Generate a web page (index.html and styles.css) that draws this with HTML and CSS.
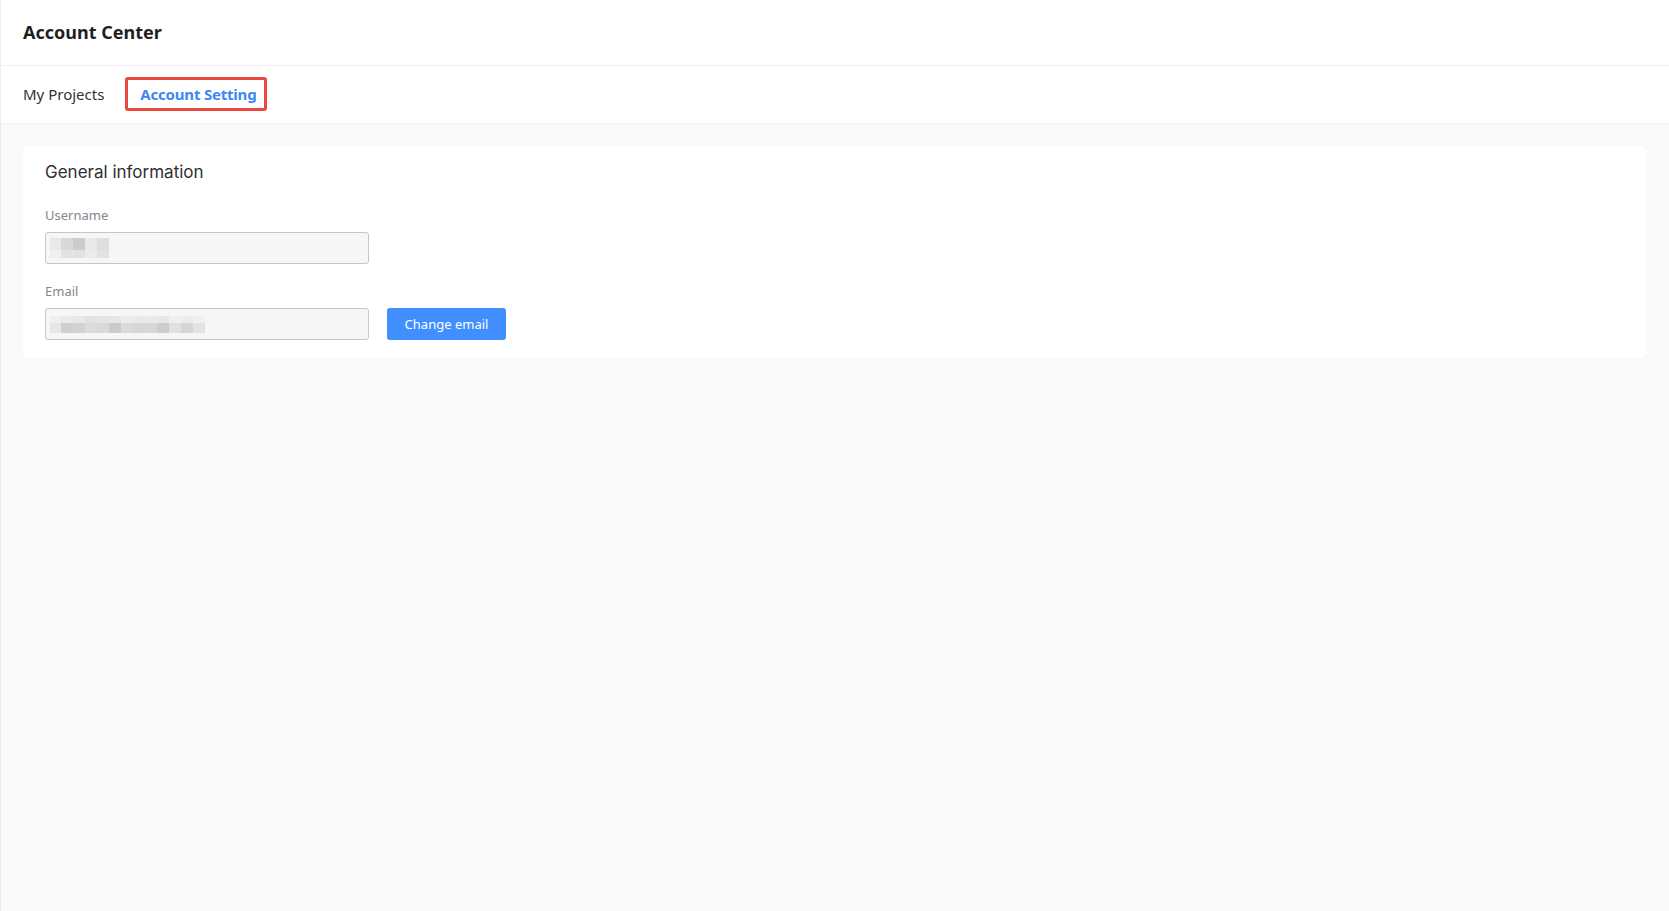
FILE: index.html
```html
<!DOCTYPE html>
<html lang="en">
<head>
<meta charset="utf-8">
<title>Account Center</title>
<link rel="stylesheet" href="styles.css">
</head>
<body>
<div class="app">
  <header class="topbar">
    <h1 class="title">Account Center</h1>
  </header>
  <nav class="tabs">
    <a class="tab">My Projects</a>
    <a class="tab tab-active">Account Setting</a>
  </nav>
  <main class="content">
    <section class="card">
      <h2 class="card-title">General information</h2>
      <div class="field">
        <label class="label">Username</label>
        <div class="input-row">
          <div class="input">
            <div class="mosaic mosaic-user">
              <div class="m-row m-user-1"></div>
              <div class="m-row m-user-2"></div>
            </div>
          </div>
        </div>
      </div>
      <div class="field">
        <label class="label">Email</label>
        <div class="input-row">
          <div class="input">
            <div class="mosaic mosaic-email">
              <div class="m-row m-email-1"></div>
              <div class="m-row m-email-2"></div>
            </div>
          </div>
          <button class="btn-primary">Change email</button>
        </div>
      </div>
    </section>
  </main>
</div>
</body>
</html>
```
FILE: styles.css
```css
* { box-sizing: border-box; }
html, body { margin: 0; height: 100%; }
body {
  font-family: "Noto Sans", "Open Sans", sans-serif;
  color: #333;
  background: #f9f9f9;
}
.app {
  min-height: 100%;
  display: flex;
  flex-direction: column;
  border-left: 1px solid #eaeef3;
}
.topbar {
  height: 66px;
  background: #fff;
  border-bottom: 1px solid #efefef;
  display: flex;
  align-items: center;
  padding: 0 22px 2px;
}
.title {
  margin: 0;
  font-size: 18px;
  font-weight: 700;
  color: #1f1f1f;
  line-height: 24px;
}
.tabs {
  height: 58px;
  background: #fff;
  border-bottom: 1px solid #eff1f4;
  display: flex;
  align-items: center;
  gap: 36px;
  padding: 0 22px 2px;
}
.tab {
  font-size: 15px;
  line-height: 22px;
  color: #333;
  position: relative;
  cursor: pointer;
}
.tab-active {
  color: #3d87f5;
  font-weight: 700;
  letter-spacing: -0.2px;
}
.tab-active::after {
  content: "";
  position: absolute;
  left: -15px;
  right: -11px;
  top: -6px;
  bottom: -6px;
  border: 3px solid #e8483e;
  border-radius: 3px;
}
.content {
  flex: 1;
  padding: 22px 22px;
}
.card {
  background: #fff;
  border-radius: 6px;
  padding: 14px 22px 18px;
}
.card-title {
  margin: 0 0 22px;
  font-family: "Inter", "Noto Sans", sans-serif;
  font-size: 17px;
  font-weight: 400;
  line-height: 24px;
  color: #2f2f33;
}
.field + .field { margin-top: 18px; }
.label {
  display: block;
  font-size: 13px;
  line-height: 18px;
  color: #85858f;
  margin-bottom: 8px;
}
.input-row {
  display: flex;
  align-items: center;
  gap: 18px;
}
.input {
  width: 324px;
  height: 32px;
  border: 1px solid #c5c5cc;
  border-radius: 3px;
  background: #f6f6f6;
  display: flex;
  align-items: center;
  padding-left: 4px;
}
.mosaic { display: flex; flex-direction: column; }
.mosaic-user { width: 59px; }
.mosaic-email { width: 155px; }
.m-row { width: 100%; }
.m-user-1 {
  height: 12px;
  background: linear-gradient(to right,
    #e9e9e9 0 11px, #d9d9da 11px 23px, #cccccc 23px 35px, #e9e9e9 35px 47px, #dedede 47px 59px);
}
.m-user-2 {
  height: 8px;
  background: linear-gradient(to right,
    #efefef 0 11px, #e3e3e4 11px 23px, #e2e2e2 23px 35px, #ececec 35px 47px, #e2e2e2 47px 59px);
}
.m-email-1 {
  height: 7px;
  background: linear-gradient(to right,
    #efefef 0 11px, #eaeaea 11px 23px, #e8e8e8 23px 35px, #e3e3e3 35px 47px, #e4e4e4 47px 59px,
    #e6e6e6 59px 71px, #ececec 71px 83px, #e9e9e9 83px 95px, #eaeaea 95px 107px, #e7e7e7 107px 119px,
    #efefef 119px 131px, #ececec 131px 143px, #f0f0f0 143px 155px);
}
.m-email-2 {
  height: 10px;
  background: linear-gradient(to right,
    #e6e6e6 0 11px, #cfcfcf 11px 23px, #d3d3d3 23px 35px, #dcdcdc 35px 47px, #d9d9d9 47px 59px,
    #cbcbcc 59px 71px, #dadada 71px 83px, #d6d6d6 83px 95px, #d7d7d7 95px 107px, #cdcdce 107px 119px,
    #e1e1e2 119px 131px, #d5d5d5 131px 143px, #e3e3e3 143px 155px);
}
.btn-primary {
  width: 119px;
  height: 32px;
  border: none;
  border-radius: 3px;
  background: #418eff;
  color: #fff;
  font-family: "Noto Sans", "Open Sans", sans-serif;
  font-size: 13px;
  cursor: pointer;
  padding: 0;
}
```
